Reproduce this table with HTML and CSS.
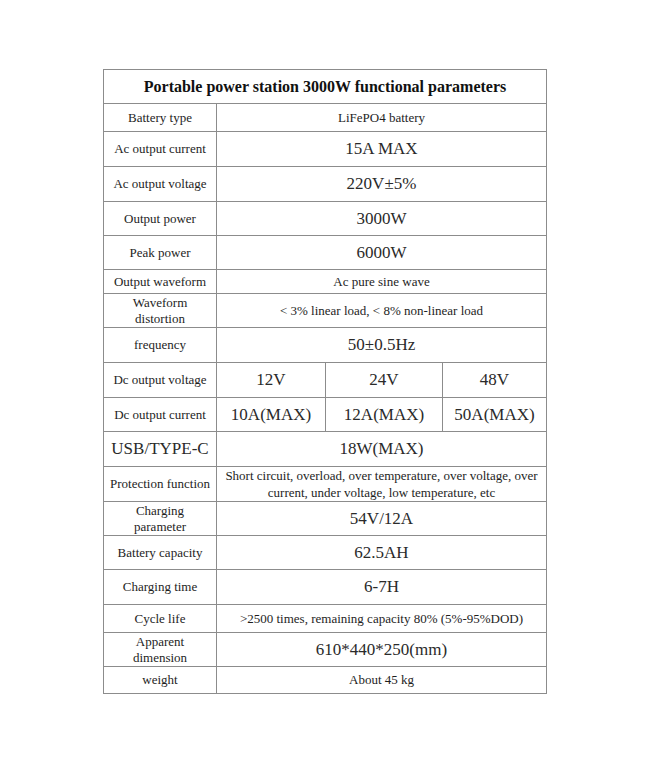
FILE: index.html
```
<!DOCTYPE html>
<html lang="en">
<head>
<meta charset="utf-8">
<title>Portable power station 3000W functional parameters</title>
<link rel="stylesheet" href="styles.css">
</head>
<body>
<div class="page">
  <div class="spec">
    <div class="cell title">Portable power station 3000W functional parameters</div>

    <div class="cell label">Battery type</div>
    <div class="cell value wide">LiFePO4 battery</div>

    <div class="cell label">Ac output current</div>
    <div class="cell value wide big">15A MAX</div>

    <div class="cell label">Ac output voltage</div>
    <div class="cell value wide big">220V±5%</div>

    <div class="cell label">Output power</div>
    <div class="cell value wide big">3000W</div>

    <div class="cell label">Peak power</div>
    <div class="cell value wide big">6000W</div>

    <div class="cell label">Output waveform</div>
    <div class="cell value wide">Ac pure sine wave</div>

    <div class="cell label">Waveform<br>distortion</div>
    <div class="cell value wide">&lt; 3% linear load, &lt; 8% non-linear load</div>

    <div class="cell label">frequency</div>
    <div class="cell value wide big">50±0.5Hz</div>

    <div class="cell label">Dc output voltage</div>
    <div class="cell value big">12V</div>
    <div class="cell value big">24V</div>
    <div class="cell value big">48V</div>

    <div class="cell label">Dc output current</div>
    <div class="cell value big">10A(MAX)</div>
    <div class="cell value big">12A(MAX)</div>
    <div class="cell value big">50A(MAX)</div>

    <div class="cell label big">USB/TYPE-C</div>
    <div class="cell value wide big">18W(MAX)</div>

    <div class="cell label">Protection function</div>
    <div class="cell value wide tight">Short circuit, overload, over temperature, over voltage, over<br>current, under voltage, low temperature, etc</div>

    <div class="cell label">Charging<br>parameter</div>
    <div class="cell value wide big">54V/12A</div>

    <div class="cell label">Battery capacity</div>
    <div class="cell value wide big">62.5AH</div>

    <div class="cell label">Charging time</div>
    <div class="cell value wide big">6-7H</div>

    <div class="cell label">Cycle life</div>
    <div class="cell value wide">&gt;2500 times, remaining capacity 80% (5%-95%DOD)</div>

    <div class="cell label">Apparent<br>dimension</div>
    <div class="cell value wide big">610*440*250(mm)</div>

    <div class="cell label">weight</div>
    <div class="cell value wide">About 45 kg</div>
  </div>
</div>
</body>
</html>
```

FILE: styles.css
```
html, body {
  margin: 0;
  padding: 0;
  background: #ffffff;
}

.page {
  width: 650px;
  height: 762px;
  padding-top: 69px;
  box-sizing: border-box;
  font-family: "Liberation Serif", "Times New Roman", serif;
  color: #1e1e1e;
}

.spec {
  width: 444px;
  margin: 0 auto;
  box-sizing: border-box;
  display: grid;
  grid-template-columns: 112px 108px 116px 103px;
  grid-template-rows: 33px 27px 34px 34px 33px 33px 23px 33px 34px 34px 33px 34px 34px 33px 33px 34px 27px 33px 26px;
  gap: 1px;
  padding: 1px;
  background: #8c8c8c;
}

.cell {
  background: #ffffff;
  display: flex;
  align-items: center;
  justify-content: center;
  text-align: center;
  font-size: 13px;
  line-height: 16px;
}

.title {
  grid-column: 1 / -1;
  font-size: 16px;
  font-weight: bold;
  color: #111111;
}

.wide {
  grid-column: 2 / -1;
}

.big {
  font-size: 17px;
  color: #2a2a2a;
}

.tight {
  line-height: 17px;
}
```
